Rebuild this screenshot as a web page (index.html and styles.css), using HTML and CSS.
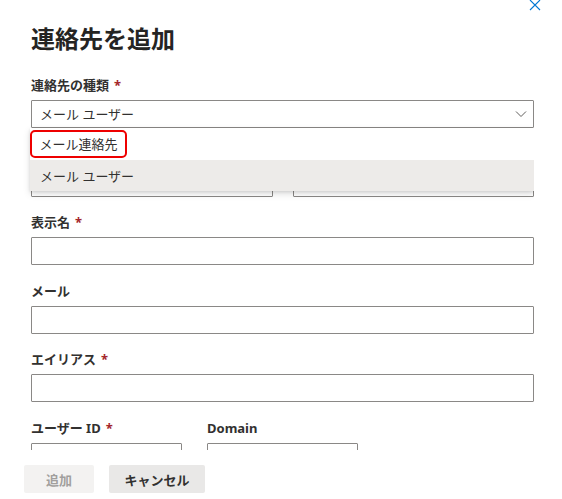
FILE: index.html
```html
<!DOCTYPE html>
<html lang="ja">
<head>
<meta charset="utf-8">
<title>連絡先を追加</title>
<link rel="stylesheet" href="styles.css">
</head>
<body>
<div class="panel">
  <button class="close" aria-label="閉じる">
    <svg width="12" height="12" viewBox="0 0 12 12"><path d="M1 1 L11 11 M11 1 L1 11" stroke="#0078d4" stroke-width="1.1" fill="none"/></svg>
  </button>
  <div class="scroll">
    <h1 class="title">連絡先を追加</h1>
    <div class="field">
      <div class="label">連絡先の種類<span class="req">*</span></div>
      <div class="dropdown">
        <span class="dd-text">メール ユーザー</span>
        <svg class="chev" width="12" height="8" viewBox="0 0 12 8"><path d="M1 1.5 L6 6.5 L11 1.5" stroke="#605e5c" stroke-width="1" fill="none"/></svg>
        <div class="callout">
          <div class="option"><span class="hl">メール連絡先</span></div>
          <div class="option selected">メール ユーザー</div>
        </div>
      </div>
    </div>
    <div class="row">
      <div class="field"><div class="label">名</div><div class="input"></div></div>
      <div class="field"><div class="label">姓</div><div class="input"></div></div>
    </div>
    <div class="field">
      <div class="label">表示名<span class="req">*</span></div>
      <div class="input"></div>
    </div>
    <div class="field">
      <div class="label">メール</div>
      <div class="input"></div>
    </div>
    <div class="field">
      <div class="label">エイリアス<span class="req">*</span></div>
      <div class="input"></div>
    </div>
    <div class="row userrow">
      <div class="field small"><div class="label">ユーザー ID<span class="req">*</span></div><div class="input"></div></div>
      <div class="at">@</div>
      <div class="field small"><div class="label">Domain</div><div class="input"></div></div>
    </div>
  </div>
  <div class="footer">
    <button class="btn disabled">追加</button>
    <button class="btn cancel">キャンセル</button>
  </div>
</div>
</body>
</html>
```
FILE: styles.css
```css
* { box-sizing: border-box; }
html, body { margin: 0; padding: 0; background: #fff; }
body {
  font-family: "Noto Sans", "Noto Sans CJK JP", sans-serif;
  color: #323130;
  font-size: 13px;
}
.panel {
  position: relative;
  width: 562px;
  height: 499px;
  display: flex;
  flex-direction: column;
}
.close {
  position: absolute;
  top: -1px;
  left: 529px;
  width: 12px;
  height: 12px;
  padding: 0;
  border: 0;
  background: none;
  line-height: 0;
}
.scroll {
  height: 450px;
  overflow: hidden;
  padding: 23px 0 0 31px;
  width: 534px;
  display: flex;
  flex-direction: column;
  gap: 15.5px;
}
.title {
  margin: 0 0 4.5px 0;
  font-size: 24px;
  line-height: 32px;
  font-weight: 700;
  color: #252423;
}
.field { display: flex; flex-direction: column; }
.label {
  font-weight: 700;
  line-height: 20px;
  margin-bottom: 5px;
  font-size: 13px;
}
.req { color: #a4262c; padding-left: 5px; }
.input, .dropdown {
  height: 28px;
  border: 1px solid #8a8886;
  border-radius: 1px;
  background: #fff;
}
.dropdown {
  position: relative;
  display: flex;
  align-items: center;
  padding: 0 8px;
}
.dd-text { flex: 1; line-height: 20px; }
.chev { margin-right: -2px; }
.callout {
  position: absolute;
  top: 27px;
  left: -2px;
  right: -1px;
  background: #fff;
  box-shadow: 0 3px 7px rgba(0,0,0,0.13), 0 1px 3px rgba(0,0,0,0.1);
  z-index: 2;
}
.option {
  height: 31.5px;
  display: flex;
  align-items: center;
  padding-left: 10px;
  color: #323130;
}
.option.selected { background: #edebe9; }
.hl {
  margin-left: -10px;
  padding: 0 7.5px 0 7.5px;
  height: 28px;
  display: flex;
  align-items: center;
  border: 2.5px solid #ee0000;
  border-radius: 5px;
}
.row { display: flex; gap: 20px; }
.row .field { flex: 1; }
.userrow { gap: 0; }
.userrow .field.small { flex: 0 0 151px; }
.at {
  width: 25px;
  padding-top: 25px;
  text-align: center;
  color: #a19f9d;
  line-height: 28px;
}
.footer {
  display: flex;
  gap: 15px;
  padding: 15px 0 0 24px;
}
.btn {
  height: 28px;
  border: 0;
  border-radius: 2px;
  font-family: "Noto Sans", "Noto Sans CJK JP", sans-serif;
  font-size: 13px;
  font-weight: 700;
  padding: 0;
}
.btn.disabled { width: 70px; background: #f3f2f1; color: #a19f9d; }
.btn.cancel { width: 96px; background: #e9e8e7; color: #323130; }
```
